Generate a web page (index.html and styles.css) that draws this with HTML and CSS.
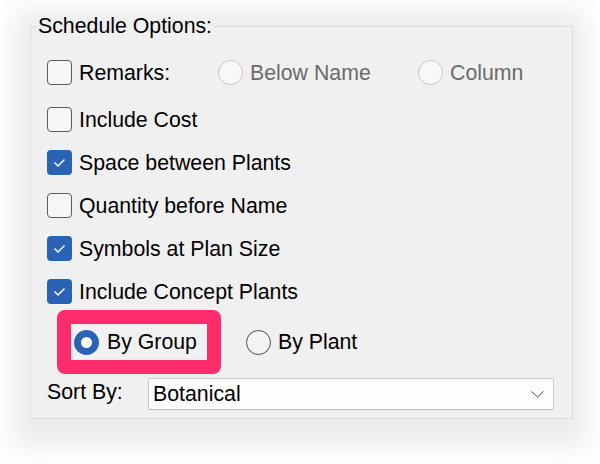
FILE: index.html
```html
<!DOCTYPE html>
<html>
<head>
<meta charset="utf-8">
<link rel="stylesheet" href="styles.css">
</head>
<body>
<div class="dialog">
  <fieldset class="group">
    <legend>Schedule Options:</legend>
    <div class="row first">
      <label class="check remarks"><span class="box"></span><span>Remarks:</span></label>
      <label class="radio disabled below"><span class="dot"></span><span>Below Name</span></label>
      <label class="radio disabled"><span class="dot"></span><span>Column</span></label>
    </div>
    <div class="row"><label class="check"><span class="box"></span><span>Include Cost</span></label></div>
    <div class="row"><label class="check"><span class="box on"><svg viewBox="0 0 25 25" width="25" height="25"><polyline points="7.5,12.5 11,16 17.5,9.5" fill="none" stroke="#fff" stroke-width="1.5"/></svg></span><span>Space between Plants</span></label></div>
    <div class="row"><label class="check"><span class="box"></span><span>Quantity before Name</span></label></div>
    <div class="row"><label class="check"><span class="box on"><svg viewBox="0 0 25 25" width="25" height="25"><polyline points="7.5,12.5 11,16 17.5,9.5" fill="none" stroke="#fff" stroke-width="1.5"/></svg></span><span>Symbols at Plan Size</span></label></div>
    <div class="row"><label class="check"><span class="box on"><svg viewBox="0 0 25 25" width="25" height="25"><polyline points="7.5,12.5 11,16 17.5,9.5" fill="none" stroke="#fff" stroke-width="1.5"/></svg></span><span>Include Concept Plants</span></label></div>
    <div class="row radios">
      <div class="highlight">
        <label class="radio"><span class="dot on"></span><span>By Group</span></label>
      </div>
      <label class="radio plant"><span class="dot dark"></span><span>By Plant</span></label>
    </div>
    <div class="sort">
      <span class="sort-label">Sort By:</span>
      <div class="select">
        <span>Botanical</span>
        <svg class="chev" viewBox="0 0 13 7" width="13" height="7"><polyline points="0.5,0.5 6.5,6 12.5,0.5" fill="none" stroke="#444" stroke-width="1"/></svg>
      </div>
    </div>
  </fieldset>
</div>
</body>
</html>
```

FILE: styles.css
```css
html, body {
  margin: 0;
  background: #fff;
}
body {
  padding: 12px 0 24px;
  min-height: 464px;
  box-sizing: border-box;
  font-family: "Liberation Sans", Arial, sans-serif;
  font-size: 21.3px;
  color: #000;
}
.dialog {
  position: relative;
  z-index: 0;
  margin: 0 22px;
  width: 556px;
  height: 428px;
  box-sizing: border-box;
  padding: 2px 0 0 8px;
}
.dialog::before {
  content: "";
  position: absolute;
  z-index: -1;
  left: -8px;
  right: -8px;
  top: -2px;
  bottom: -8px;
  background: #ececec;
  filter: blur(12px);
}
.group {
  margin: 0;
  width: 543px;
  box-sizing: border-box;
  border: 1px solid #dcdcdc;
  padding: 13px 18px 8px 16px;
  min-width: 0;
  background: #f0f0f0;
}
.group legend {
  margin-left: -11px;
  padding: 0 2px;
  line-height: 24px;
}
.row {
  height: 43px;
  display: flex;
  align-items: center;
}
.row.first {
  margin-bottom: 4px;
}
.check, .radio {
  display: flex;
  align-items: center;
  gap: 7px;
  line-height: 24px;
  white-space: nowrap;
}
.check.remarks {
  width: 171px;
}
.radio.below {
  width: 200px;
}
.box {
  width: 25px;
  height: 25px;
  box-sizing: border-box;
  border: 1.5px solid #5c5c5c;
  border-radius: 4px;
  background: #f6f6f6;
  flex: none;
}
.box.on {
  border: none;
  background: #2a62b6;
}
.box svg {
  display: block;
}
.dot {
  width: 25px;
  height: 25px;
  box-sizing: border-box;
  border-radius: 50%;
  border: 1.5px solid #c6c6c6;
  background: #f8f8f8;
  flex: none;
}
.radio.disabled {
  color: #6b6b6b;
}
.dot.dark {
  border-color: #4a4a4a;
  background: #f3f3f3;
}
.dot.on {
  border: 7.5px solid #2a62b6;
  background: #fff;
}
.row.radios {
  height: 64px;
  margin-top: -3px;
}
.highlight {
  margin-left: 10px;
  height: 64px;
  box-sizing: border-box;
  border: 14px solid #fe2c6c;
  border-radius: 8px;
  padding: 0 10px 0 3px;
  display: flex;
  align-items: center;
  background: #f1f1f1;
}
.highlight .radio {
  gap: 8px;
}
.radio.plant {
  margin-left: 25px;
}
.sort {
  margin-top: 4px;
  display: flex;
  align-items: flex-start;
}
.sort-label {
  width: 101px;
  margin-top: 2px;
  line-height: 24px;
}
.select {
  flex: 1;
  height: 32px;
  box-sizing: border-box;
  border: 1px solid #c8c8c8;
  border-bottom-color: #bcbcbc;
  border-radius: 2px;
  background: #fdfdfd;
  display: flex;
  align-items: center;
  justify-content: space-between;
  padding: 0 9px 0 4px;
  line-height: 24px;
}
.chev {
  display: block;
  margin-top: 1px;
}
```
